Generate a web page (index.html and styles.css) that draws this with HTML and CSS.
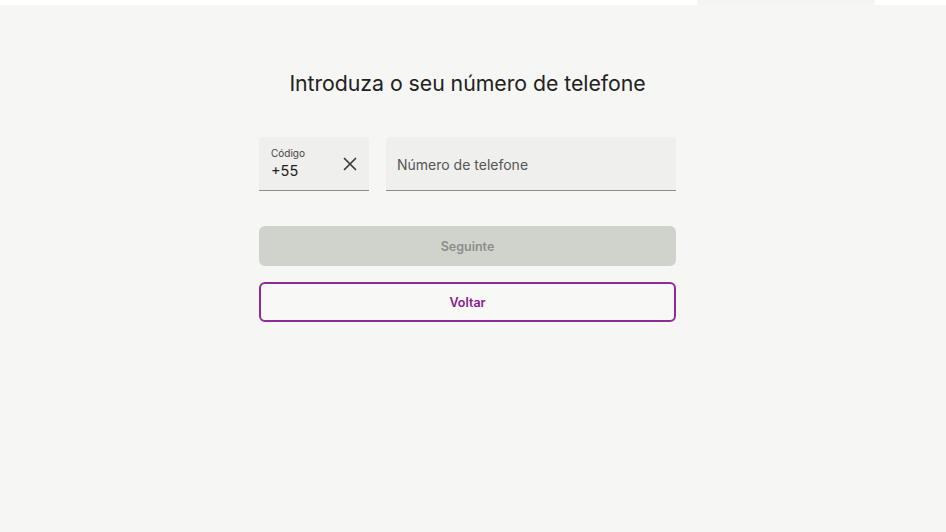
FILE: index.html
```html
<!DOCTYPE html>
<html lang="pt">
<head>
<meta charset="utf-8">
<title>Introduza o seu número de telefone</title>
<link rel="stylesheet" href="styles.css">
</head>
<body>
<div class="topbar"><div class="toptab"></div></div>
<main class="page">
  <div class="panel">
    <h1 class="title">Introduza o seu número de telefone</h1>
    <div class="fields">
      <div class="field code">
        <div class="code-text">
          <span class="label">Código</span>
          <span class="value">+55</span>
        </div>
        <svg class="clear" viewBox="0 0 14 14" width="14" height="14" aria-hidden="true">
          <path d="M1.5 1.5 L12.5 12.5 M12.5 1.5 L1.5 12.5" stroke="#3a3a3a" stroke-width="1.7" stroke-linecap="round" fill="none"/>
        </svg>
      </div>
      <div class="field phone">
        <span class="placeholder">Número de telefone</span>
      </div>
    </div>
    <button class="btn btn-next" type="button">Seguinte</button>
    <button class="btn btn-back" type="button">Voltar</button>
  </div>
</main>
</body>
</html>
```
FILE: styles.css
```css
* { box-sizing: border-box; }
html, body { margin: 0; padding: 0; }
body {
  background: #f6f6f4;
  font-family: Inter, "Noto Sans", sans-serif;
  color: #222;
  width: 946px;
  height: 532px;
  overflow: hidden;
}
.topbar {
  height: 5px;
  background: #ffffff;
  position: relative;
}
.toptab {
  position: absolute;
  left: 697px;
  top: 0;
  width: 178px;
  height: 5px;
  background: #f4f4f3;
  border-radius: 0 0 3px 3px;
}
.page {
  padding-left: 259px;
}
.panel {
  width: 417px;
  display: flex;
  flex-direction: column;
}
.title {
  margin: 64px 0 0;
  font-size: 21.3px;
  font-weight: 400;
  line-height: 28px;
  text-align: center;
  color: #222;
  letter-spacing: -0.05px;
}
.fields {
  display: flex;
  gap: 17px;
  margin-top: 40px;
}
.field {
  height: 54px;
  background: #efefee;
  border-bottom: 1.5px solid #8c8c8c;
  border-radius: 3px 3px 0 0;
  display: flex;
  align-items: center;
  padding-top: 1px;
}
.code {
  width: 110px;
  padding-left: 12px;
  padding-right: 12px;
  justify-content: space-between;
}
.code-text {
  display: flex;
  flex-direction: column;
}
.label {
  font-size: 10px;
  line-height: 13px;
  color: #444;
}
.value {
  font-size: 14.5px;
  line-height: 20px;
  color: #222;
  margin-top: 1px;
}
.clear { display: block; margin-top: -1px; }
.phone {
  flex: 1;
  padding-left: 11px;
  padding-right: 11px;
}
.placeholder {
  font-size: 14px;
  color: #555;
}
.btn {
  height: 40px;
  width: 100%;
  border-radius: 6px;
  font-family: Inter, "Noto Sans", sans-serif;
  font-size: 12.5px;
  font-weight: 600;
  cursor: pointer;
}
.btn-next {
  margin-top: 35px;
  background: #d0d3cc;
  border: none;
  color: #8b8e88;
}
.btn-back {
  margin-top: 16px;
  background: #f8f8f7;
  border: 2px solid #8f2a97;
  color: #86208f;
}
```
